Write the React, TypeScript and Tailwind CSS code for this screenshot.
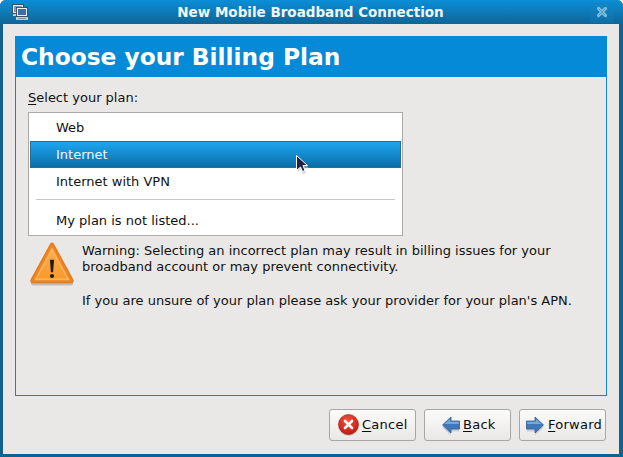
import React from "react";

const Under = ({ children }: { children: React.ReactNode }) => <span className="underline underline-offset-2">{children}</span>;

const WindowIcon = () => (
  <svg width="16" height="16" viewBox="0 0 16 16" className="shrink-0">
    <rect x="0.5" y="0.5" width="11" height="9" fill="#e6eaec" stroke="#2f3a42" strokeWidth="0.8" />
    <rect x="2" y="2" width="8" height="6" fill="#7d9cbc" />
    <rect x="1" y="10" width="4" height="2" fill="#c9ccc9" />
    <rect x="4.5" y="3.5" width="11" height="9" fill="#eef0f0" stroke="#2f3a42" strokeWidth="0.8" />
    <rect x="6" y="5" width="8" height="6" fill="#3f6da8" />
    <rect x="4" y="13" width="12" height="3" fill="#c9c9c5" />
    <rect x="6" y="14" width="8" height="1" fill="#8e9092" />
  </svg>
);

const CloseX = () => (
  <svg width="12" height="12" viewBox="0 0 12 12">
    <path d="M2.5 2.5 L9.5 9.5 M9.5 2.5 L2.5 9.5" stroke="#7fbcdc" strokeWidth="3.2" strokeLinecap="round" />
    <path d="M3 3 L9 9 M9 3 L3 9" stroke="#4f9fcc" strokeWidth="1" />
  </svg>
);

const WarnIcon = () => (
  <svg width="48" height="48" viewBox="0 0 46 46" className="shrink-0">
    <defs>
      <linearGradient id="w" x1="0" y1="0" x2="0" y2="1">
        <stop offset="0" stopColor="#fbae4c" />
        <stop offset="1" stopColor="#f89a2c" />
      </linearGradient>
    </defs>
    <path d="M23 3 L43 39 Q44 42 41 42 H5 Q2 42 3 39 Z" fill="#bdbcb8" transform="translate(0 1.5)" />
    <path d="M23 3 Q24 3 25 5 L43 38 Q44 41 41 41 H5 Q2 41 3 38 L21 5 Q22 3 23 3 Z" fill="#ee8420" stroke="#e0761a" strokeWidth="1" />
    <path d="M23 7 L40 38.5 H6 Z" fill="#fbb45a" />
    <path d="M23 10.5 L37.5 37 H8.5 Z" fill="url(#w)" />
    <path d="M21 19 H25 L24 31 H22 Z" fill="#1f1a14" />
    <circle cx="23" cy="34.5" r="2" fill="#1f1a14" />
  </svg>
);

const CancelIcon = () => (
  <svg width="21" height="22" viewBox="0 0 21 22" className="shrink-0">
    <defs>
      <radialGradient id="c" cx="0.45" cy="0.3" r="0.8">
        <stop offset="0" stopColor="#f4523f" />
        <stop offset="1" stopColor="#b8140c" />
      </radialGradient>
    </defs>
    <ellipse cx="10.5" cy="12" rx="10" ry="10" fill="#c9c8c6" />
    <circle cx="10.5" cy="10.5" r="10" fill="url(#c)" stroke="#a5140c" strokeWidth="0.6" />
    <path d="M7 7 L14 14 M14 7 L7 14" stroke="#fff" strokeWidth="2.6" strokeLinecap="round" />
  </svg>
);

const ArrowIcon = ({ dir }: { dir: "left" | "right" }) => (
  <svg width="18" height="20" viewBox="0 0 18 20" className="shrink-0 mt-[2px]">
    <g transform={dir === "left" ? "translate(18 0) scale(-1 1)" : undefined}>
      <path d="M0.5 6 H9 V2 L17.5 10 L9 18 V14 H0.5 Z" fill="#cfcecb" transform="translate(0 1.5)" />
      <path d="M0.5 5 H9 V1 L17.5 9 L9 17 V13 H0.5 Z" fill="#3f78b8" stroke="#2f5f97" strokeWidth="0.8" strokeLinejoin="round" />
      <path d="M1.2 5.8 H9.8 V3 L15.5 8 H1.2 Z" fill="#7ea6d2" />
    </g>
  </svg>
);

const Cursor = () => (
  <svg width="14" height="20" viewBox="0 0 14 20" className="absolute left-[296px] top-[155px]">
    <path d="M1.5 3 L13 13 L8.5 13.5 L10 18 L7 19 L5 14.5 L2 17 Z" fill="#b9bcc0" opacity="0.6" />
    <path d="M0.5 0.5 L11.5 10.5 L7 10.5 L9 15.5 L6.5 16.5 L4.5 12 L0.5 15.5 Z" fill="#1e2346" stroke="#fff" strokeWidth="1" />
  </svg>
);

const Btn = ({ pl, icon, children, gap }: { pl: string; icon: React.ReactNode; children: React.ReactNode; gap: string }) => (
  <div className={`${pl} ${gap} w-[87px] h-8 flex items-center rounded-[3px] border border-[#a8a7a5] bg-gradient-to-b from-[#fbfbfa] to-[#e9e8e6] text-[13px] tracking-[0.25px] text-[#0c0c0c]`}>
    {icon}
    <span>{children}</span>
  </div>
);

export default function App() {
  return (
    <div className="relative w-[623px] h-[457px] overflow-hidden flex flex-col rounded-t-[6px] bg-[#11628f] text-[13px] text-[#111]" style={{ fontFamily: '"DejaVu Sans", sans-serif' }}>
      <div className="h-6 shrink-0 flex items-center pl-3 pr-[9px] bg-gradient-to-b from-[#0a8fd8] to-[#0f6596]">
        <WindowIcon />
        <div className="flex-1 pl-[3px] pt-px text-center text-[13.5px] font-bold text-[#f2f6f8]">New Mobile Broadband Connection</div>
        <div className="w-6 h-[21px] flex items-center justify-center bg-gradient-to-b from-[#0f88cc] to-[#106ea6]"><CloseX /></div>
      </div>
      <div className="flex-1 ml-[3px] mr-[4px] mb-[3px] bg-[#e9e8e6] pt-3 px-3 flex flex-col">
        <div className="h-[360px] border border-[#0a88d4] flex flex-col">
          <div className="h-[41px] -mt-px -mx-px shrink-0 bg-[#048ad6] flex items-center pl-[6px] text-[23.3px] leading-none font-bold text-white">Choose your Billing Plan</div>
          <div className="pt-[13px] pl-[12px] flex flex-col">
            <div className="leading-4 h-4"><Under>S</Under>elect your plan:</div>
            <div className="mt-[6px] w-[375px] h-[124px] border border-[#a9a9a9] bg-white px-px flex flex-col">
              <div className="h-7 pt-[2px] flex items-center pl-[26px]">Web</div>
              <div className="h-[27px] flex items-center pl-[25px] text-[#f2f8fc] border border-[#2a6c92] bg-gradient-to-b from-[#1ea6f0] to-[#0a6ea8]">Internet</div>
              <div className="h-[27px] flex items-center pl-[26px]">Internet with VPN</div>
              <div className="mt-[4px] mx-[6px] h-px bg-[#c8c8c8]" />
              <div className="h-[35px] pt-[6px] flex items-center pl-[26px]">My plan is not listed...</div>
            </div>
            <div className="mt-[4px] flex gap-[6px]">
              <WarnIcon />
              <div className="pt-[3px] leading-4">
                <p className="whitespace-nowrap">Warning: Selecting an incorrect plan may result in billing issues for your</p>
                <p className="whitespace-nowrap">broadband account or may prevent connectivity.</p>
                <p className="mt-[18px] whitespace-nowrap">If you are unsure of your plan please ask your provider for your plan's APN.</p>
              </div>
            </div>
          </div>
        </div>
        <div className="mt-[13px] flex justify-end gap-2 mr-px">
          <Btn pl="pl-[8px]" gap="gap-[3px]" icon={<CancelIcon />}><Under>C</Under>ancel</Btn>
          <Btn pl="pl-[17px]" gap="gap-[3px]" icon={<ArrowIcon dir="left" />}><Under>B</Under>ack</Btn>
          <Btn pl="pl-[6px]" gap="gap-[4px]" icon={<ArrowIcon dir="right" />}><Under>F</Under>orward</Btn>
        </div>
      </div>
      <Cursor />
    </div>
  );
}
